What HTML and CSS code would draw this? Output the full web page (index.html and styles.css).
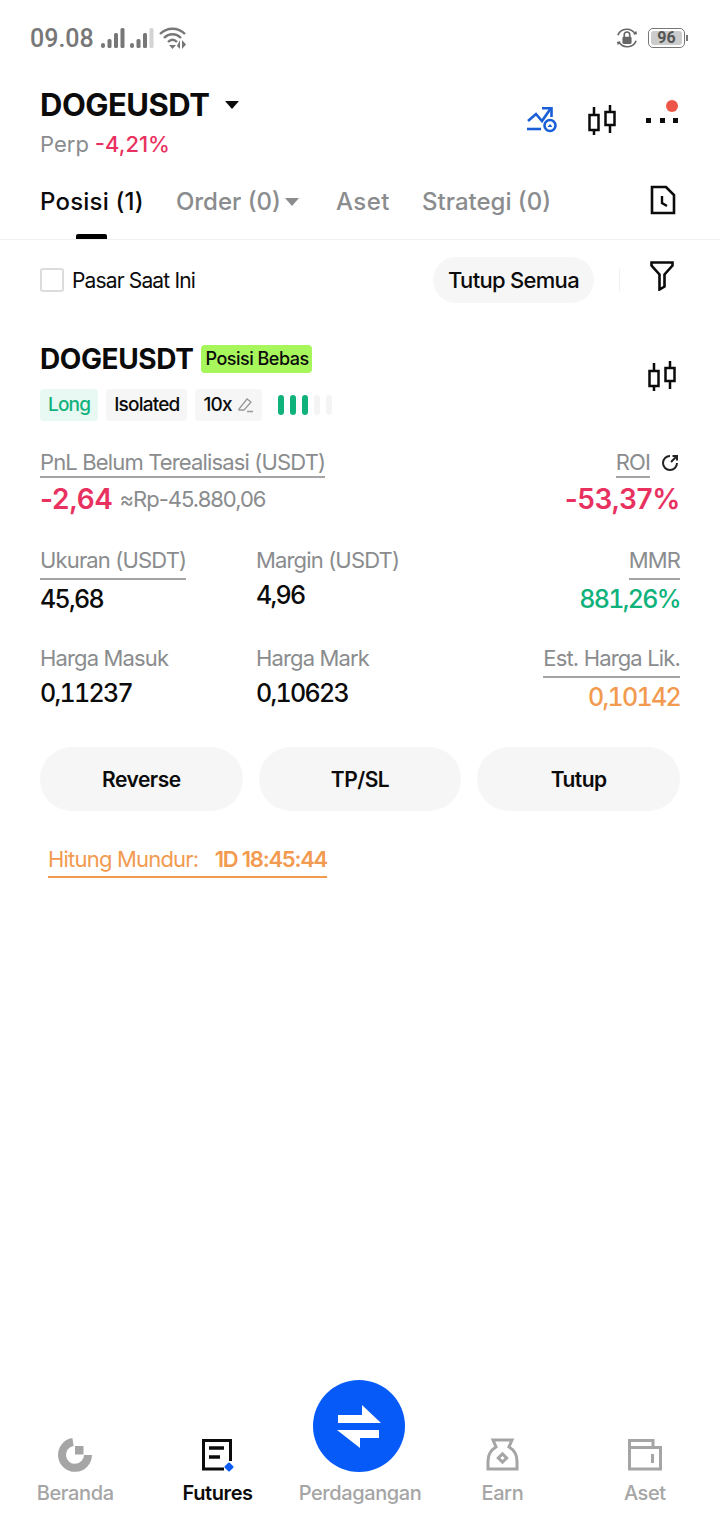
FILE: index.html
```html
<!DOCTYPE html>
<html lang="id">
<head>
  <meta charset="UTF-8">
  <title>DOGEUSDT Futures</title>
  <link rel="stylesheet" href="styles.css">
</head>
<body>
<div class="page">

  <div class="status-bar">
    <span class="time">09.08</span>
    <svg class="signal" width="24" height="22" viewBox="0 0 24 22"><rect x="0" y="16" width="4" height="5" rx="2"/><rect x="6.500" y="12" width="4" height="9" rx="1.500"/><rect x="13" y="6" width="4" height="15" rx="1.500"/><rect x="19.500" y="1" width="4" height="20" rx="1.500"/></svg>
    <svg class="signal" width="24" height="22" viewBox="0 0 24 22"><rect x="0" y="16" width="4" height="5" rx="2"/><rect x="6.500" y="12" width="4" height="9" rx="1.500"/><rect x="13" y="6" width="4" height="15" rx="1.500"/><rect x="19.500" y="1" width="4" height="20" rx="1.500" fill="#d4d4d4"/></svg>
    <svg class="wifi" width="28" height="24" viewBox="0 0 28 24" fill="none" stroke="#777" stroke-width="2.400"><path d="M1 8C8 1 19 1 26 8"/><path d="M5 12C10 7 17 7 22 12"/><path d="M9 16c3-3 6-3 9 0"/><path d="M10 19h7l-3.500 4z" fill="#777" stroke="none"/><path d="M21 23v-9l-3 6z" fill="#777" stroke="none"/><path d="M23 14v9l4-4.500z" fill="#777" stroke="none"/></svg>
    <span class="status-right">
      <svg width="22" height="22" viewBox="0 0 24 24" fill="none"><path d="M21 8A10.500 10.500 0 0 0 2 9M3 16a10.500 10.500 0 0 0 19-1" stroke="#666" stroke-width="1.800"/><path d="M19 8h4l-1-4zM5 16H1l1 4z" fill="#666"/><rect x="7" y="10.500" width="10" height="8" rx="1.500" fill="#666"/><path d="M9 11V8.500a3 3 0 0 1 6 0V11" stroke="#666" stroke-width="1.800"/></svg>
      <span class="battery"><span class="battery-level">96</span></span>
      <span class="battery-tip"></span>
    </span>
  </div>

  <div class="header">
    <div class="pair">
      <div class="pair-name">DOGEUSDT <span class="caret"></span></div>
      <div class="pair-sub"><span class="perp">Perp</span><span class="red">-4,21%</span></div>
    </div>
    <div class="header-icons">
      <svg width="30" height="26" viewBox="0 0 30 26" fill="none" stroke="#1a5fd8" stroke-width="2.600"><path d="M1 14l8-7 6 7 9-13"/><path d="M15 1.300h9.500V10"/><path d="M0 22h14"/><circle cx="23" cy="18.500" r="5.500"/><path d="M20.500 20h5L23 17z" fill="#1a5fd8" stroke="none"/></svg>
      <svg class="candles" width="28" height="30" viewBox="0 0 28 30" fill="none" stroke="#0b0b0b" stroke-width="2.500"><path d="M6 2v8M6 25v5M22 0v7M22 20v8"/><rect x="1.500" y="10" width="9" height="15"/><rect x="17.500" y="7" width="9" height="13"/></svg>
      <div class="more">
        <span class="dot"></span><span class="dot"></span><span class="dot"></span>
        <span class="notify"></span>
      </div>
    </div>
  </div>

  <div class="tabs">
    <div class="tab active">Posisi (1)</div>
    <div class="tab">Order (0)<span class="caret small"></span></div>
    <div class="tab tab-aset">Aset</div>
    <div class="tab">Strategi (0)</div>
    <svg class="history" width="26" height="30" viewBox="0 0 26 30" fill="none" stroke="#0b0b0b" stroke-width="2.600"><path d="M2 2h14l8 8v18H2z"/><path d="M12 11v7l5 3" stroke-width="2.400"/></svg>
  </div>

  <div class="filter-row">
    <span class="checkbox"></span>
    <span class="check-label">Pasar Saat Ini</span>
    <button class="close-all">Tutup Semua</button>
    <span class="vsep"></span>
    <svg class="filter" width="26" height="30" viewBox="0 0 26 30" fill="none" stroke="#0b0b0b" stroke-width="2.600"><path d="M1.500 1.500h21v3l-8 9v12l-5 3V13.500l-8-9z"/></svg>
  </div>

  <div class="position">
    <div class="pos-head">
      <div>
        <div class="pos-title"><span class="pos-name">DOGEUSDT</span><span class="badge-free">Posisi Bebas</span></div>
        <div class="tags">
          <span class="tag tag-long">Long</span>
          <span class="tag">Isolated</span>
          <span class="tag tag-lev">10x
            <svg width="16" height="16" viewBox="0 0 16 16" fill="none" stroke="#999" stroke-width="1.300"><path d="M1 12l8-10 4 3-7 8H1zM9 14.500h6"/></svg>
          </span>
          <span class="adl"><i class="on"></i><i class="on"></i><i class="on"></i><i></i><i></i></span>
        </div>
      </div>
      <svg class="candles" width="28" height="30" viewBox="0 0 28 30" fill="none" stroke="#0b0b0b" stroke-width="2.500"><path d="M6 2v8M6 25v5M22 0v7M22 20v8"/><rect x="1.500" y="10" width="9" height="15"/><rect x="17.500" y="7" width="9" height="13"/></svg>
    </div>

    <div class="pnl-row">
      <div>
        <span class="label under">PnL Belum Terealisasi (USDT)</span>
        <div class="pnl-value"><span class="pnl-main red">-2,64</span><span class="pnl-idr">≈Rp-45.880,06</span></div>
      </div>
      <div class="right">
        <span class="roi-line"><span class="label under">ROI</span>
          <svg width="20" height="20" viewBox="0 0 20 20" fill="none" stroke="#222" stroke-width="2"><path d="M10 3a7 7 0 1 0 7 7"/><path d="M11 9l6-6M12.500 3H17v4.500"/></svg>
        </span>
        <div class="pnl-main red">-53,37%</div>
      </div>
    </div>

    <div class="stats">
      <div><span class="label under">Ukuran (USDT)</span><div class="val">45,68</div></div>
      <div><span class="label">Margin (USDT)</span><div class="val plain">4,96</div></div>
      <div class="right"><span class="label under">MMR</span><div class="val green">881,26%</div></div>
      <div><span class="label">Harga Masuk</span><div class="val plain">0,11237</div></div>
      <div><span class="label">Harga Mark</span><div class="val plain">0,10623</div></div>
      <div class="right"><span class="label under">Est. Harga Lik.</span><div class="val orange">0,10142</div></div>
    </div>

    <div class="actions">
      <button>Reverse</button>
      <button>TP/SL</button>
      <button>Tutup</button>
    </div>

    <div class="countdown"><span>Hitung Mundur:</span><b>1D 18:45:44</b></div>
  </div>

  <div class="bottom-nav">
    <div class="nav-item">
      <svg width="36" height="36" viewBox="0 0 36 36" fill="none"><path d="M16 5A13 13 0 1 0 31 18" stroke="#a5a5a5" stroke-width="8"/><rect x="18" y="9" width="8.500" height="8.500" fill="#a5a5a5"/></svg>
      <span>Beranda</span>
    </div>
    <div class="nav-item active">
      <svg width="36" height="36" viewBox="0 0 36 36" fill="none"><path d="M30.500 24V3.500H3.500V32H24" stroke="#0b0b0b" stroke-width="3"/><path d="M9 11h15M9 20h11" stroke="#0b0b0b" stroke-width="3.400"/><rect x="25.500" y="26.500" width="7" height="7" rx="1" transform="rotate(45 29 30)" fill="#0a5cf5"/></svg>
      <span>Futures</span>
    </div>
    <div class="nav-item"><span class="nav-gap"></span><span>Perdagangan</span></div>
    <div class="nav-item">
      <svg width="36" height="36" viewBox="0 0 36 36" fill="none" stroke="#a5a5a5" stroke-width="3"><path d="M9 3h19l-3 7c5 3 8 8 8 14v8H4v-8c0-6 3-11 8-14z"/><rect x="15.500" y="18" width="6" height="6" transform="rotate(45 18.500 21)"/></svg>
      <span>Earn</span>
    </div>
    <div class="nav-item">
      <svg width="36" height="36" viewBox="0 0 36 36" fill="none" stroke="#a5a5a5" stroke-width="3"><path d="M2.500 32V3.500H26V10"/><path d="M2.500 10.500h31V32h-31z"/><path d="M25.500 17v9"/></svg>
      <span>Aset</span>
    </div>
    <button class="trade-btn">
      <svg width="48" height="48" viewBox="0 0 48 48" fill="#fff"><path d="M3 13H27V3L46 21H3z"/><path d="M44 28H2L25 46V36H44z"/></svg>
    </button>
  </div>

</div>
</body>
</html>
```

FILE: styles.css
```css
* {
  box-sizing: border-box;
}
body {
  margin: 0;
  background: #fff;
  color: #0b0b0b;
  font-family: Inter, "Noto Sans", sans-serif;
}
button {
  font-family: inherit;
  border: none;
  cursor: pointer;
}
.page {
  width: 720px;
  height: 1520px;
  display: flex;
  flex-direction: column;
  overflow: hidden;
}
.red {
  color: #e8315f;
}
.green {
  color: #10b27c;
}
.orange {
  color: #f29a4f;
}
.right {
  text-align: right;
}

/* status bar */
.status-bar {
  height: 76px;
  padding: 0 32px 0 30px;
  display: flex;
  align-items: center;
  color: #777;
}
.time {
  font-family: Roboto, sans-serif;
  font-size: 25px;
  font-weight: 500;
  margin-right: 7px;
}
.signal {
  fill: #777;
  margin-right: 5px;
}
.status-right {
  margin-left: auto;
  display: flex;
  align-items: center;
}
.battery {
  width: 37px;
  height: 20px;
  margin-left: 10px;
  padding: 2px;
  border: 1px solid #777;
  border-radius: 5px;
  display: flex;
}
.battery-level {
  flex: 1;
  background: #ccc;
  border-radius: 3px;
  color: #555;
  font-family: Roboto, sans-serif;
  font-size: 16px;
  font-weight: 700;
  line-height: 14px;
  text-align: center;
}
.battery-tip {
  width: 2px;
  height: 6px;
  margin-left: 1px;
  background: #777;
}

/* header */
.header {
  height: 92px;
  padding: 10px 42px 0 40px;
  display: flex;
  justify-content: space-between;
  align-items: flex-start;
}
.pair-name {
  font-size: 31px;
  font-weight: 700;
  line-height: 38px;
  letter-spacing: -0.5px;
  display: flex;
  align-items: center;
}
.caret {
  display: inline-block;
  width: 0;
  height: 0;
  margin-left: 16px;
  border-left: 7px solid transparent;
  border-right: 7px solid transparent;
  border-top: 8px solid #0b0b0b;
}
.caret.small {
  margin: 0 5px 0 4px;
  border-top-color: #8a8c8e;
  vertical-align: 4px;
}
.pair-sub {
  margin-top: 6px;
  font-size: 22px;
  line-height: 28px;
  font-weight: 500;
}
.perp {
  color: #8a8c8e;
  font-weight: 400;
  margin-right: 6px;
}
.header-icons {
  padding-top: 19px;
  display: flex;
  align-items: center;
}
.header-icons .candles {
  margin-left: 31px;
}
.more {
  width: 32px;
  margin-left: 30px;
  display: flex;
  justify-content: space-between;
  position: relative;
}
.dot {
  width: 5px;
  height: 5px;
  background: #0b0b0b;
}
.notify {
  position: absolute;
  top: -18px;
  right: 0;
  width: 12px;
  height: 12px;
  border-radius: 50%;
  background: #ee5549;
}

/* tabs */
.tabs {
  height: 72px;
  padding: 0 44px 0 40px;
  display: flex;
  align-items: center;
  gap: 32px;
  border-bottom: 1px solid #f0f0f0;
  position: relative;
}
.tab {
  font-size: 24px;
  font-weight: 500;
  color: #8a8c8e;
  white-space: nowrap;
  padding-bottom: 4px;
}
.tab-aset {
  letter-spacing: 0.5px;
}
.tab.active {
  color: #0b0b0b;
  letter-spacing: 0.2px;
  position: relative;
}
.tab.active::after {
  content: "";
  position: absolute;
  left: 36px;
  bottom: -19px;
  width: 31px;
  height: 5px;
  border-radius: 2px 2px 0 0;
  background: #000;
}
.history {
  margin-left: auto;
  margin-bottom: 8px;
}

/* filter row */
.filter-row {
  height: 80px;
  padding: 0 44px 0 40px;
  display: flex;
  align-items: center;
}
.checkbox {
  width: 24px;
  height: 24px;
  border: 2px solid #dcdcdc;
  border-radius: 3px;
}
.check-label {
  margin-left: 8px;
  font-size: 21px;
  letter-spacing: -0.85px;
}
.close-all {
  margin-left: auto;
  width: 161px;
  height: 46px;
  border-radius: 23px;
  background: #f6f6f6;
  color: #0b0b0b;
  font-size: 22px;
  font-weight: 500;
  letter-spacing: -0.7px;
}
.vsep {
  width: 1px;
  height: 22px;
  margin: 0 30px 0 25px;
  background: #f0f0f0;
}
.filter {
  margin-bottom: 8px;
}

/* position card */
.position {
  padding: 22px 40px 0;
}
.pos-head {
  display: flex;
  justify-content: space-between;
  align-items: center;
  padding-right: 4px;
}
.pos-head .candles {
  margin-bottom: 12px;
}
.pos-title {
  display: flex;
  align-items: center;
}
.pos-name {
  font-size: 28px;
  font-weight: 700;
  letter-spacing: -0.4px;
}
.badge-free {
  margin-left: 8px;
  height: 28px;
  padding: 0 3px 0 4px;
  border-radius: 4px;
  background: #a6f65c;
  font-size: 18px;
  font-weight: 500;
  line-height: 28px;
  letter-spacing: -0.5px;
}
.tags {
  margin-top: 13px;
  display: flex;
  align-items: center;
  gap: 8px;
}
.tag {
  height: 32px;
  padding: 0 8px;
  border-radius: 4px;
  background: #f6f6f6;
  font-size: 19px;
  line-height: 32px;
  font-weight: 500;
  letter-spacing: -0.8px;
  display: flex;
  align-items: center;
  gap: 6px;
}
.tag-long {
  background: #e8f8f2;
  color: #10b27c;
}
.adl {
  margin-left: 8px;
  display: flex;
  gap: 6px;
}
.adl i {
  width: 6px;
  height: 20px;
  border-radius: 3px;
  background: #f4f4f4;
}
.adl i.on {
  background: #10b27c;
}
.label {
  display: inline-block;
  color: #8a8c8e;
  font-size: 22px;
  line-height: 28px;
  letter-spacing: -0.85px;
}
.label.under {
  border-bottom: 2px solid #a5a5a5;
}
.pnl-row {
  margin-top: 27px;
  display: flex;
  justify-content: space-between;
}
.pnl-value {
  display: flex;
  align-items: center;
  gap: 7px;
}
.pnl-main {
  font-size: 28px;
  line-height: 42px;
  font-weight: 600;
  letter-spacing: -0.4px;
}
.pnl-idr {
  color: #8a8c8e;
  font-size: 22px;
  letter-spacing: -1px;
}
.roi-line {
  display: flex;
  justify-content: flex-end;
  align-items: center;
  gap: 10px;
}
.stats {
  margin-top: 26px;
  display: grid;
  grid-template-columns: 216px 1fr auto;
  row-gap: 28px;
}
.stats .label.under {
  padding-bottom: 4px;
}
.val {
  margin-top: 2px;
  font-size: 25px;
  line-height: 34px;
  font-weight: 500;
  letter-spacing: -1.7px;
  font-variant-numeric: tabular-nums;
}
.val.plain {
  margin-top: 4px;
}
.actions {
  margin-top: 33px;
  display: flex;
  gap: 16px;
}
.actions button {
  flex: 1;
  height: 64px;
  border-radius: 32px;
  background: #f6f6f6;
  color: #0b0b0b;
  font-size: 21px;
  font-weight: 600;
  letter-spacing: -0.5px;
}
.countdown {
  display: flex;
  justify-content: space-between;
  margin: 33px 0 0 8px;
  padding-bottom: 2px;
  width: 279px;
  white-space: nowrap;
  border-bottom: 2px solid #f29a4f;
  color: #f29a4f;
  font-size: 22px;
  line-height: 30px;
  letter-spacing: -0.8px;
}
.countdown b {
  font-weight: 600;
  letter-spacing: -1.25px;
}

/* bottom nav */
.bottom-nav {
  margin-top: auto;
  height: 83px;
  padding: 0 4px;
  display: flex;
  position: relative;
}
.nav-item {
  flex: 1;
  display: flex;
  flex-direction: column;
  align-items: center;
  gap: 7px;
  color: #a5a5a5;
  font-size: 20px;
  font-weight: 500;
  line-height: 26px;
  letter-spacing: -0.4px;
}
.nav-item.active {
  color: #0b0b0b;
  font-weight: 600;
}
.nav-gap {
  height: 36px;
}
.trade-btn {
  position: absolute;
  left: 313px;
  top: -57px;
  width: 92px;
  height: 92px;
  border-radius: 50%;
  background: #065bf8;
  padding: 0;
  display: flex;
  align-items: center;
  justify-content: center;
}
```
